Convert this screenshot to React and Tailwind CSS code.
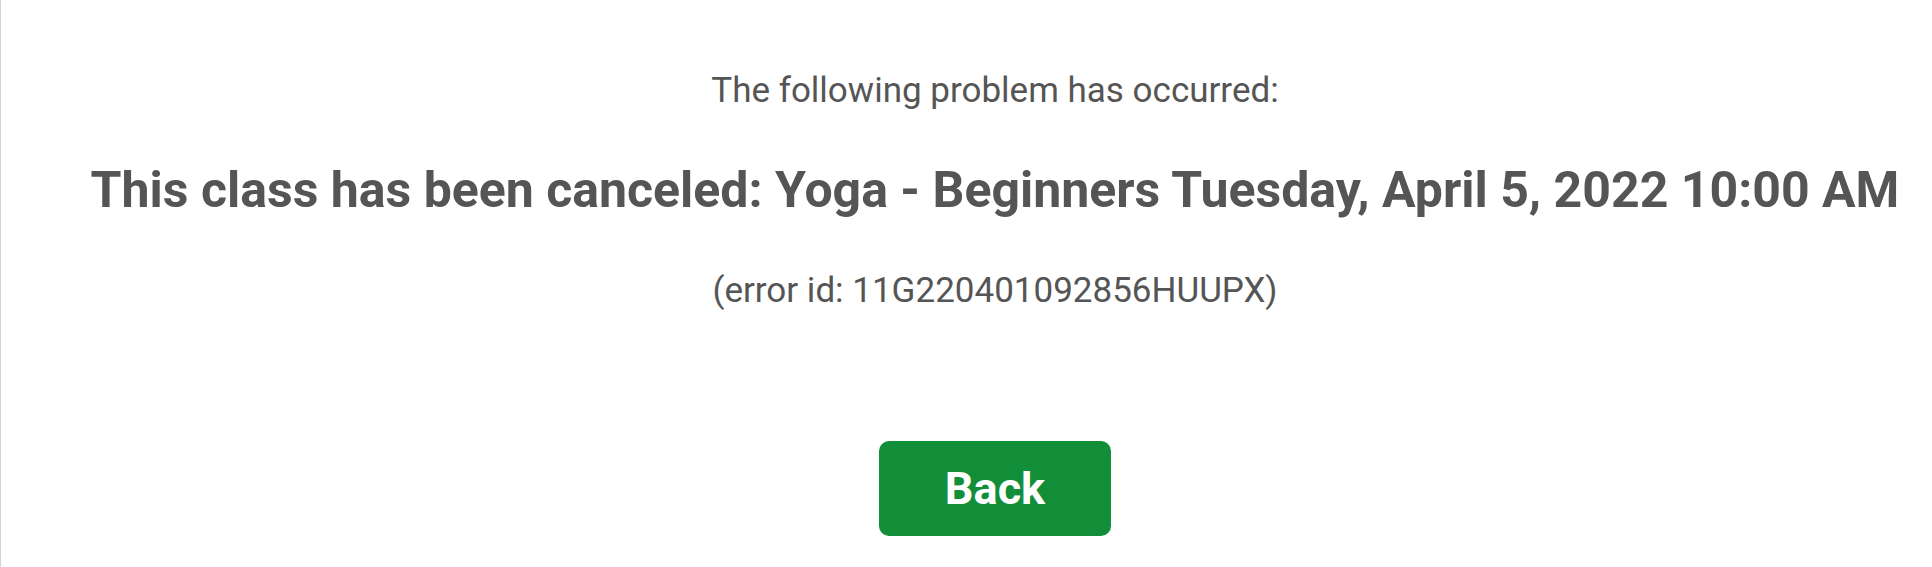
export default function App() {
  return (
    <div
      className="min-h-[567px] bg-white border-l border-[#d4d4d4] pl-[57px] text-[#555555]"
      style={{ fontFamily: 'Roboto, "Liberation Sans", sans-serif' }}
    >
      <div className="flex flex-col items-center pt-[73px] text-center">
        <p className="text-[35px] leading-none">The following problem has occurred:</p>
        <h1 className="mt-[57px] text-[50px] leading-none font-bold whitespace-nowrap">
          This class has been canceled: Yoga - Beginners Tuesday, April 5, 2022 10:00 AM
        </h1>
        <p className="mt-[58px] text-[35px] leading-none">(error id: 11G220401092856HUUPX)</p>
        <button
          type="button"
          className="mt-[133px] w-[232px] h-[95px] rounded-[10px] bg-[#128e39] text-white text-[45px] font-bold leading-none"
        >
          Back
        </button>
      </div>
    </div>
  );
}
